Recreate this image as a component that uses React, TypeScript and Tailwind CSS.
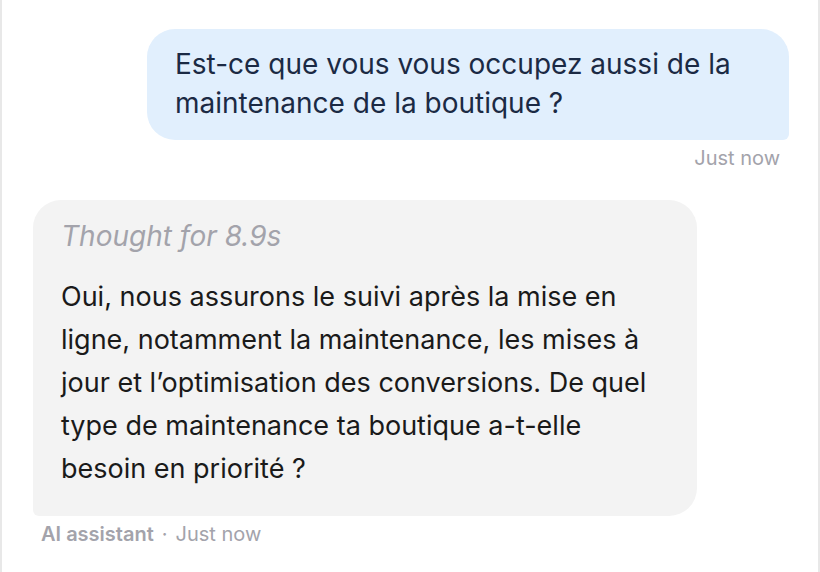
export default function App() {
  return (
    <div
      className="flex h-[572px] w-[820px] flex-col border-x-2 border-[#e8e8e8] bg-white"
      style={{ fontFamily: "Inter, 'Noto Sans', sans-serif" }}
    >
      <div className="flex flex-col items-end pt-[29px] pr-[29px]">
        <div className="w-[642px] rounded-[28px] rounded-br-[6px] bg-[#e1effd] px-7 pt-4 pb-[17px] text-[28px] leading-[39px] text-[#1b2a44]">
          Est-ce que vous vous occupez aussi de la maintenance de la boutique ?
        </div>
        <div className="mt-[6px] pr-[9px] text-[20px] leading-6 text-[#a3a3ab]">
          Just now
        </div>
      </div>

      <div className="mt-[30px] flex flex-col items-start pl-[31px]">
        <div className="w-[664px] rounded-[28px] rounded-bl-[6px] bg-[#f3f3f3] px-7 pt-[18px] pb-[26px]">
          <div className="text-[28px] leading-9 italic text-[#a3a3ab]">
            Thought for 8.9s
          </div>
          <div className="mt-[21px] text-[27px] leading-[43px] text-[#1a1a1a]">
            Oui, nous assurons le suivi après la mise en ligne, notamment la
            maintenance, les mises à jour et l’optimisation des conversions. De
            quel type de maintenance ta boutique a-t-elle besoin en priorité ?
          </div>
        </div>
        <div className="mt-[6px] flex items-center pl-2 text-[20px] leading-6 text-[#a3a3ab]">
          <span className="font-semibold">AI assistant</span>
          <span className="mx-[8px]">·</span>
          <span>Just now</span>
        </div>
      </div>
    </div>
  );
}
